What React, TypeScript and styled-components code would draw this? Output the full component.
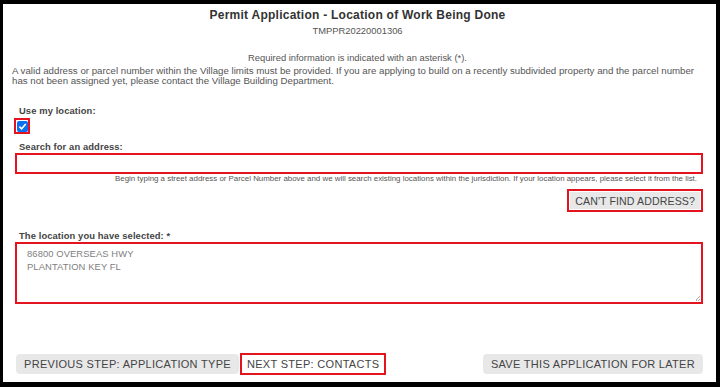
import React from "react";
import styled, { createGlobalStyle } from "styled-components";

const Global = createGlobalStyle`
  html, body { margin: 0; padding: 0; background: #000; }
  body { font-family: "Liberation Sans", Arial, sans-serif; }
  * { box-sizing: border-box; }
`;

const Frame = styled.div`
  width: 720px;
  height: 387px;
  padding: 4px 4px 5px 3px;
  background: #000;
`;

const Page = styled.div`
  width: 100%;
  height: 100%;
  background: #fff;
  display: flex;
  flex-direction: column;
  padding: 3px 13px 0 9px;
  color: #555;
`;

const Title = styled.h1`
  margin: 0;
  font-size: 12px;
  line-height: 16px;
  font-weight: bold;
  color: #333;
  text-align: center;
  letter-spacing: 0.25px;
`;

const Subtitle = styled.div`
  margin-top: 2px;
  font-size: 9.4px;
  line-height: 12px;
  text-align: center;
  color: #555;
`;

const Required = styled.div`
  margin-top: 15px;
  font-size: 9.4px;
  line-height: 12px;
  text-align: center;
`;

const Para = styled.p`
  margin: 2px 0 0;
  font-size: 9.7px;
  line-height: 10px;
  color: #555;
`;

const Form = styled.div`
  display: flex;
  flex-direction: column;
  margin-left: 3px;
`;

const Label = styled.label<{ $top: number }>`
  margin-top: ${(p) => p.$top}px;
  padding-left: 4px;
  font-size: 9.4px;
  line-height: 12px;
  font-weight: bold;
  color: #444;
  letter-spacing: 0.1px;
`;

const CheckWrap = styled.span`
  margin-top: 1px;
  margin-left: -1px;
  width: 16px;
  height: 16px;
  border: 2px solid #e3141f;
  display: flex;
  align-items: center;
  justify-content: center;
`;

const CheckBox = styled.span`
  width: 11px;
  height: 11px;
  background: #0a6ff0;
  border-radius: 2px;
  display: flex;
  align-items: center;
  justify-content: center;
`;

const Input = styled.div<{ $h: number }>`
  height: ${(p) => p.$h}px;
  border: 2px solid #e3141f;
  background: #fff;
  padding: 3px 10px;
  font-size: 9.4px;
  line-height: 13px;
  letter-spacing: 0.1px;
  color: #808080;
  position: relative;
`;

const Help = styled.div`
  margin-top: 0;
  padding-right: 6px;
  font-size: 7.9px;
  line-height: 10px;
  text-align: right;
  color: #555;
`;

const RightRow = styled.div`
  display: flex;
  justify-content: flex-end;
  margin-top: 5px;
`;

const Button = styled.button<{ $outlined?: boolean }>`
  font-family: "Liberation Sans", Arial, sans-serif;
  font-size: 11px;
  letter-spacing: 0.3px;
  color: #444;
  background: ${(p) => (p.$outlined ? "#fff" : "#e8e8e8")};
  border: ${(p) => (p.$outlined ? "2px solid #e3141f" : "none")};
  border-radius: ${(p) => (p.$outlined ? "0" : "4px")};
  height: ${(p) => (p.$outlined ? "22px" : "20px")};
  padding: ${(p) => (p.$outlined ? "0 5px" : "0 8px")};
  white-space: nowrap;
  cursor: pointer;
`;

const FramedButton = styled.div`
  border: 2px solid #e3141f;
  padding: 1px;
  display: flex;
`;

const InnerButton = styled.button`
  font-family: "Liberation Sans", Arial, sans-serif;
  font-size: 10.6px;
  letter-spacing: 0.1px;
  color: #444;
  background: #e8e8e8;
  border: none;
  height: 17px;
  padding: 0 5px;
  white-space: nowrap;
`;

const Grip = styled.span`
  position: absolute;
  right: 1px;
  bottom: 1px;
  width: 5px;
  height: 5px;
  background: linear-gradient(135deg, transparent 50%, #aaa 50%, #aaa 60%, transparent 60%, transparent 75%, #aaa 75%, #aaa 85%, transparent 85%);
`;

const Footer = styled.div`
  margin-top: auto;
  margin-bottom: 7px;
  margin-left: 4px;
  display: flex;
  justify-content: space-between;
  align-items: center;
`;

const Group = styled.div`
  display: flex;
  align-items: center;
  gap: 1px;
`;

export default function App() {
  return (
    <>
      <Global />
      <Frame>
        <Page>
          <Title>Permit Application - Location of Work Being Done</Title>
          <Subtitle>TMPPR20220001306</Subtitle>
          <Required>Required information is indicated with an asterisk (*).</Required>
          <Para>
            A valid address or parcel number within the Village limits must be provided. If you are applying to build on a recently subdivided property and the parcel number
            has not been assigned yet, please contact the Village Building Department.
          </Para>
          <Form>
            <Label $top={19}>Use my location:</Label>
            <CheckWrap>
              <CheckBox>
                <svg width="9" height="9" viewBox="0 0 10 10">
                  <path d="M1.5 5.2 L4 7.6 L8.6 2.2" fill="none" stroke="#fff" strokeWidth="1.8" />
                </svg>
              </CheckBox>
            </CheckWrap>
            <Label $top={7}>Search for an address:</Label>
            <Input $h={21} />
            <Help>
              Begin typing a street address or Parcel Number above and we will search existing locations within the jurisdiction. If your location appears, please select it from the list.
            </Help>
            <RightRow>
              <FramedButton>
                <InnerButton>CAN'T FIND ADDRESS?</InnerButton>
              </FramedButton>
            </RightRow>
            <Label $top={18}>The location you have selected: *</Label>
            <Input $h={62}>
              86800 OVERSEAS HWY
              <br />
              PLANTATION KEY FL
              <Grip />
            </Input>
          </Form>
          <Footer>
            <Group>
              <Button>PREVIOUS STEP: APPLICATION TYPE</Button>
              <Button $outlined>NEXT STEP: CONTACTS</Button>
            </Group>
            <Button>SAVE THIS APPLICATION FOR LATER</Button>
          </Footer>
        </Page>
      </Frame>
    </>
  );
}
